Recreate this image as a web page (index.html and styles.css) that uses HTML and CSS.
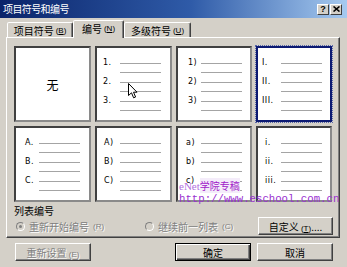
FILE: index.html
```html
<!DOCTYPE html>
<html lang="zh-CN">
<head>
  <meta charset="UTF-8">
  <title>项目符号和编号</title>
  <link rel="stylesheet" href="styles.css">
</head>
<body>
  <div class="window">
    <div class="titlebar">
      <span class="title">项目符号和编号</span>
      <div class="caption-btns">
        <span class="cap-btn">?</span>
        <span class="cap-btn">
          <svg width="7" height="6" viewBox="0 0 7 6"><path d="M0.5 0.5 L6.5 5.5 M6.5 0.5 L0.5 5.5" stroke="#000" stroke-width="1.6"/></svg>
        </span>
      </div>
    </div>

    <div class="tabs">
      <div class="tab t1">项目符号 <small>(<u>B</u>)</small></div>
      <div class="tab t2 active">编号 <small>(<u>N</u>)</small></div>
      <div class="tab t3">多级符号 <small>(<u>U</u>)</small></div>
    </div>

    <div class="panel">
      <div class="gallery">
        <div class="cell none">无</div>

        <div class="cell">
          <div class="item"><span class="num">1.</span><span class="lines"><i></i><i></i></span></div>
          <div class="item"><span class="num">2.</span><span class="lines"><i></i><i></i></span></div>
          <div class="item"><span class="num">3.</span><span class="lines"><i></i><i></i></span></div>
        </div>

        <div class="cell off-4">
          <div class="item"><span class="num">1)</span><span class="lines"><i></i><i></i></span></div>
          <div class="item"><span class="num">2)</span><span class="lines"><i></i><i></i></span></div>
          <div class="item"><span class="num">3)</span><span class="lines"><i></i><i></i></span></div>
        </div>

        <div class="cell selected off-m2">
          <div class="item"><span class="num">I.</span><span class="lines"><i></i><i></i></span></div>
          <div class="item"><span class="num">II.</span><span class="lines"><i></i><i></i></span></div>
          <div class="item"><span class="num">III.</span><span class="lines"><i></i><i></i></span></div>
        </div>

        <div class="cell off-3">
          <div class="item"><span class="num">A.</span><span class="lines"><i></i><i></i></span></div>
          <div class="item"><span class="num">B.</span><span class="lines"><i></i><i></i></span></div>
          <div class="item"><span class="num">C.</span><span class="lines"><i></i><i></i></span></div>
        </div>

        <div class="cell off-1">
          <div class="item"><span class="num">A)</span><span class="lines"><i></i><i></i></span></div>
          <div class="item"><span class="num">B)</span><span class="lines"><i></i><i></i></span></div>
          <div class="item"><span class="num">C)</span><span class="lines"><i></i><i></i></span></div>
        </div>

        <div class="cell off-2">
          <div class="item"><span class="num">a)</span><span class="lines"><i></i><i></i></span></div>
          <div class="item"><span class="num">b)</span><span class="lines"><i></i><i></i></span></div>
          <div class="item"><span class="num">c)</span><span class="lines"><i></i><i></i></span></div>
        </div>

        <div class="cell off-1">
          <div class="item"><span class="num">i.</span><span class="lines"><i></i><i></i></span></div>
          <div class="item"><span class="num">ii.</span><span class="lines"><i></i><i></i></span></div>
          <div class="item"><span class="num">iii.</span><span class="lines"><i></i><i></i></span></div>
        </div>
      </div>

      <div class="group-label">列表编号</div>
      <div class="group-row">
        <span class="radio first disabled"><span class="dot checked"></span>重新开始编号 <small>(R)</small></span>
        <span class="radio disabled"><span class="dot"></span>继续前一列表 <small>(C)</small></span>
        <button class="btn custom">自定义 <small>(<u>T</u>)</small>....</button>
      </div>
    </div>

    <div class="footer">
      <button class="btn disabled">重新设置 <small>(E)</small></button>
      <button class="btn default">确定</button>
      <button class="btn">取消</button>
    </div>

    <svg class="cursor" width="10" height="16" viewBox="0 0 10 16">
      <path d="M0.5 0.5 L0.5 12.5 L3.5 9.8 L5.6 14.8 L7.6 14 L5.5 9.2 L9 9.2 Z" fill="#fff" stroke="#000" stroke-width="1"/>
    </svg>

    <div class="watermark">
      <div class="wm-top">eNet<span class="wm-cn">学院专稿</span></div>
      <div class="wm-url">http://www.eschool.com.cn</div>
    </div>
  </div>
</body>
</html>
```

FILE: styles.css
```css
* {
  box-sizing: border-box;
}

body {
  margin: 0;
  background: #d4d0c8;
  font-family: "Noto Sans CJK SC", "Liberation Sans", sans-serif;
  font-size: 10px;
  color: #000;
}

small {
  font-size: 8px;
  font-family: "Liberation Sans", sans-serif;
}

.window {
  position: relative;
  width: 347px;
  height: 267px;
  background: #d4d0c8;
  overflow: hidden;
}

/* title bar */
.titlebar {
  height: 18px;
  display: flex;
  align-items: center;
  justify-content: space-between;
  padding: 0 5px 0 3px;
  background: linear-gradient(to right, #0a246a 0%, #2f5ba8 55%, #a6caf0 100%);
  color: #fff;
}

.title {
  font-size: 10px;
  letter-spacing: -0.6px;
  line-height: 18px;
}

.caption-btns {
  display: flex;
  gap: 1px;
}

.cap-btn {
  width: 12px;
  height: 11px;
  display: flex;
  align-items: center;
  justify-content: center;
  background: #d4d0c8;
  border: 1px solid;
  border-color: #fff #404040 #404040 #fff;
  color: #000;
  font-family: "Liberation Sans", sans-serif;
  font-weight: bold;
  font-size: 9px;
}

/* tabs */
.tabs {
  display: flex;
  height: 19px;
  padding: 2px 0 0 7px;
  position: relative;
  z-index: 1;
}

.tab {
  height: 15px;
  margin-top: 2px;
  display: flex;
  align-items: center;
  justify-content: center;
  border: 1px solid;
  border-bottom: none;
  border-color: #fff #404040 transparent #fff;
  border-radius: 2px 2px 0 0;
  box-shadow: inset -1px 0 #808080;
  background: #d4d0c8;
  gap: 2px;
}

.tab.t1 { width: 66px; }
.tab.t2 { width: 51px; }
.tab.t3 { width: 67px; }

.tab.active {
  height: 18px;
  margin-top: 0;
  padding-bottom: 2px;
}

/* panel */
.panel {
  margin-left: 6px;
  width: 334px;
  height: 201px;
  border: 1px solid;
  border-color: #fff #404040 #404040 #fff;
  box-shadow: inset -1px -1px #808080;
  padding: 8px 6px 0 7px;
}

.gallery {
  display: grid;
  grid-template-columns: 77px 77px 76px 76px;
  grid-template-rows: 76px 76px;
  gap: 4px;
}

.cell {
  background: #fff;
  border: 2px solid;
  border-color: #404040 #8a8a8a #8a8a8a #404040;
  padding: 10px 0 0 6px;
}

.cell.none {
  display: flex;
  align-items: center;
  justify-content: center;
  padding: 0;
  font-size: 12px;
}

.cell.selected {
  border-color: #0c1a72;
  outline: 1px dotted #5866a8;
}

.item {
  display: flex;
  height: 19px;
}

.num {
  width: 17px;
  line-height: 10px;
  font-family: "DejaVu Sans", sans-serif;
  font-size: 8px;
  color: #000;
  white-space: nowrap;
  letter-spacing: 0.5px;
}

.off-1 .num { padding-left: 1px; }
.off-2 .num { padding-left: 2px; }
.off-3 .num { padding-left: 3px; }
.off-4 .num { padding-left: 4px; }
.off-m2 .num { margin-left: -2px; width: 19px; }

.lines {
  display: flex;
  flex-direction: column;
  gap: 8px;
  padding-top: 5px;
  width: 41px;
}

.lines i {
  display: block;
  height: 1px;
  background: #a4a4a4;
}

/* list numbering group */
.group-label {
  margin-top: 3px;
  height: 11px;
  line-height: 11px;
}

.group-row {
  display: flex;
  align-items: center;
  height: 18px;
  margin-top: 1px;
}

.radio {
  display: flex;
  align-items: center;
  gap: 4px;
}

.radio.first {
  width: 129px;
  margin-left: 2px;
}

.disabled,
.btn.disabled {
  color: #808080;
  text-shadow: 1px 1px #fff;
}

.dot {
  width: 9px;
  height: 9px;
  border-radius: 50%;
  border: 1px solid;
  border-color: #808080 #fff #fff #808080;
  background: #d4d0c8;
  display: flex;
  align-items: center;
  justify-content: center;
}

.dot.checked::after {
  content: "";
  width: 3px;
  height: 3px;
  border-radius: 50%;
  background: #808080;
}

/* buttons */
.btn {
  width: 76px;
  height: 18px;
  padding: 0;
  font: inherit;
  background: #d4d0c8;
  border: 1px solid;
  border-color: #fff #404040 #404040 #fff;
  box-shadow: inset -1px -1px #808080;
  color: #000;
}

.btn.custom {
  width: 75px;
  margin-left: auto;
}

.btn.default {
  border-color: #000;
  box-shadow: inset 1px 1px #fff, inset -1px -1px #404040, inset -2px -2px #808080;
  margin-left: auto;
}

.footer {
  display: flex;
  gap: 6px;
  margin-top: 5px;
  padding: 0 14px 0 15px;
}

/* overlays */
.cursor {
  position: absolute;
  left: 128px;
  top: 83px;
}

.watermark {
  position: absolute;
  left: 179px;
  top: 180px;
  color: #9a30d0;
  line-height: 11px;
}

.wm-top {
  font-family: "Liberation Serif", "Noto Sans CJK SC", serif;
  font-size: 11px;
  color: #b070e0;
}

.wm-cn {
  font-family: "Noto Sans CJK SC", sans-serif;
  font-size: 10px;
  color: #a018c8;
  background: #f4ecfa;
}

.wm-url {
  margin-top: 2px;
  font-family: "Liberation Mono", monospace;
  font-size: 10.7px;
  color: #9a30d0;
}
```
